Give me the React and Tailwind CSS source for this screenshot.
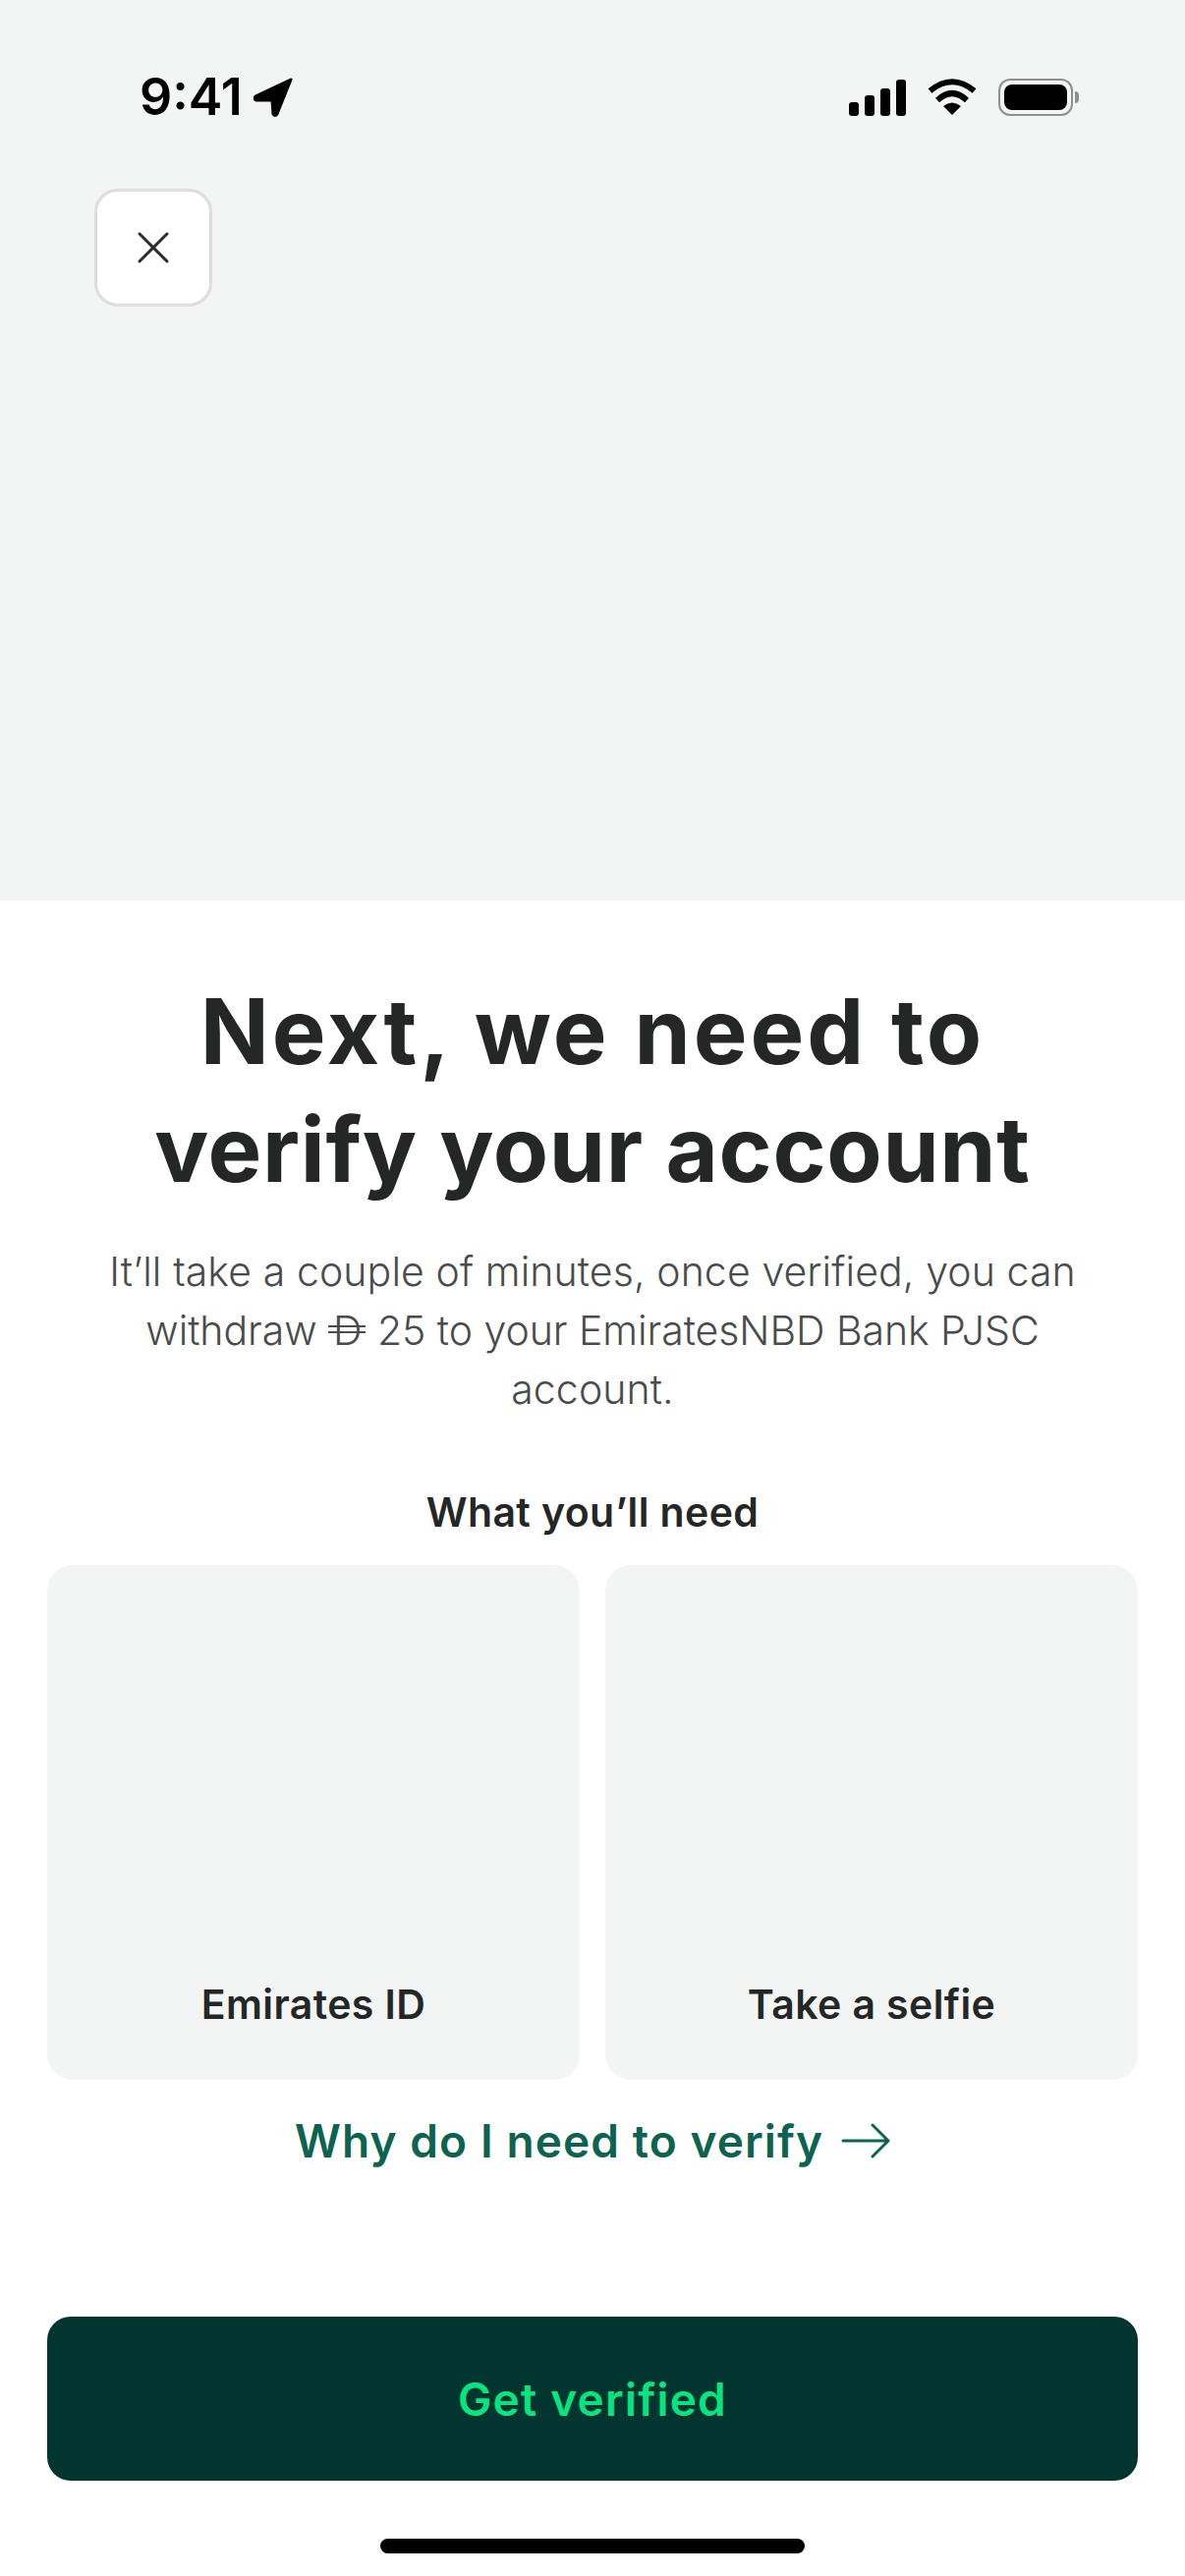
import { X } from 'lucide-react';

function StatusBar() {
    return (
        <div className="flex items-center justify-between h-[60px] pl-[142px] pr-[108px] pt-[2px]">
            <div className="flex items-center gap-[11px]">
                <span className="text-[52px] leading-[60px] font-semibold text-black">9:41</span>
                <svg width="40" height="40" viewBox="0 0 40 40">
                    <path d="M38 2 L2 19 Q0 22 3 23 L19 23 L20 37 Q22 40 24 37 Z" fill="#000" stroke="#000" strokeWidth="3" strokeLinejoin="round" />
                </svg>
            </div>
            <div className="flex items-center gap-[22px]">
                <div className="flex items-end gap-[6px] h-[38px]">
                    <div className="w-[10px] h-[14px] rounded-[3px] bg-black"></div>
                    <div className="w-[10px] h-[21px] rounded-[3px] bg-black"></div>
                    <div className="w-[10px] h-[28px] rounded-[3px] bg-black"></div>
                    <div className="w-[10px] h-[37px] rounded-[3px] bg-black"></div>
                </div>
                <svg width="50" height="38" viewBox="0 0 50 38">
                    <path d="M25 37 L16 28 Q25 21 34 28 Z" fill="#000" />
                    <path d="M10 22 Q25 8 40 22" fill="none" stroke="#000" strokeWidth="6" />
                    <path d="M2.5 12.5 Q25 -6 47.5 12.5" fill="none" stroke="#000" strokeWidth="6" />
                </svg>
                <div className="flex items-center gap-[2px]">
                    <div className="w-[76px] h-[38px] rounded-[12px] border-[2px] border-[#8e8f8e] p-[4px]">
                        <div className="w-full h-full rounded-[8px] bg-black"></div>
                    </div>
                    <div className="w-[4px] h-[12px] rounded-r-[4px] bg-[#8e8f8e]"></div>
                </div>
            </div>
        </div>
    );
}

function Card({ label }) {
    return (
        <div className="flex-1 h-[524px] rounded-[26px] bg-[#f3f5f4] flex items-end justify-center pb-[53px]">
            <span className="text-[41px] leading-[48px] font-semibold tracking-[0.4px] text-[#252726]">{label}</span>
        </div>
    );
}

export default function App() {
    return (
        <main className="w-[1206px] h-[2622px] bg-white flex flex-col font-['Inter',sans-serif]">
            <section className="h-[917px] bg-[#f3f5f4] pt-[68px]">
                <StatusBar />
                <button className="ml-[96px] mt-[64px] w-[120px] h-[120px] rounded-[24px] bg-white border-[3px] border-[#dcdddc] flex items-center justify-center">
                    <X size={56} strokeWidth={1.3} color="#2c2e2d" />
                </button>
            </section>

            <section className="flex-1 px-[48px] flex flex-col items-center">
                <h1 className="mt-[73px] text-center text-[92px] leading-[120px] font-bold text-[#252726]">
                    <span className="block tracking-[3px]">Next, we need to</span>
                    <span className="block tracking-[0.7px]">verify your account</span>
                </h1>
                <p className="mt-[34px] text-center text-[41px] leading-[60px] font-light tracking-[0.1px] text-[#4a4c4b]">
                    It’ll take a couple of minutes, once verified, you can<br />
                    <span className="tracking-[-0.05px]">
                        withdraw <span className="relative inline-block ml-[5px] mr-[4px]">D
                            <span className="absolute left-[-5px] right-[-3px] top-[25px] h-[2px] bg-[#4a4c4b]"></span>
                            <span className="absolute left-[-5px] right-[-3px] top-[31px] h-[2px] bg-[#4a4c4b]"></span>
                        </span> 25 to your EmiratesNBD Bank PJSC
                    </span><br />
                    account.
                </p>
                <h2 className="mt-[65px] text-center text-[41px] leading-[60px] font-semibold tracking-[0.4px] text-[#252726]">What you’ll need</h2>
                <div className="mt-[24px] w-full flex gap-[26px]">
                    <Card label="Emirates ID" />
                    <Card label="Take a selfie" />
                </div>
                <a className="mt-[34px] flex items-center gap-[18px] text-[46px] leading-[56px] font-semibold tracking-[1.1px] text-[#0d6350]">
                    Why do I need to verify
                    <svg width="50" height="36" viewBox="0 0 50 36" fill="none" stroke="#0d6350" strokeWidth="3" strokeLinecap="round" strokeLinejoin="round">
                        <path d="M2 18 H48 M32 2 L48 18 L32 34" />
                    </svg>
                </a>
                <button className="mt-[151px] w-full h-[167px] pt-[2px] rounded-[24px] bg-[#023530] text-[46px] font-semibold tracking-[1.2px] text-[#06e47f]">
                    Get verified
                </button>
                <div className="mt-[59px] w-[432px] h-[15px] rounded-full bg-black"></div>
            </section>
        </main>
    );
}
